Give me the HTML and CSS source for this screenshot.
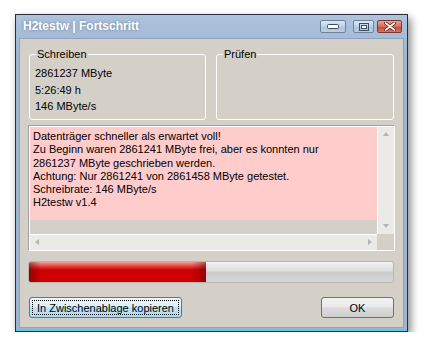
FILE: index.html
```html
<!DOCTYPE html>
<html lang="de">
<head>
<meta charset="utf-8">
<title>H2testw | Fortschritt</title>
<link rel="stylesheet" href="styles.css">
</head>
<body>
<div class="window">
  <div class="titlebar">
    <span class="title">H2testw | Fortschritt</span>
    <div class="caption-buttons">
      <span class="cbtn min"><svg width="12" height="6" viewBox="0 0 12 6"><rect x="0.5" y="0.5" width="11" height="4" rx="1" fill="#fff" stroke="#3c4d63"/></svg></span>
      <span class="cbtn max"><svg width="10" height="8" viewBox="0 0 10 8"><rect x="0.5" y="0.5" width="9" height="7" fill="none" stroke="#3c4d63"/><rect x="2.5" y="2.5" width="5" height="3" fill="#fff" stroke="#3c4d63"/></svg></span>
      <span class="cbtn close"><svg width="12" height="9" viewBox="0 0 12 9"><path d="M1.5 1 L10.5 8 M10.5 1 L1.5 8" stroke="#5b1a12" stroke-width="3.2" stroke-linecap="round"/><path d="M1.5 1 L10.5 8 M10.5 1 L1.5 8" stroke="#fff" stroke-width="1.6" stroke-linecap="round"/></svg></span>
    </div>
  </div>
  <div class="client">
    <div class="groups">
      <fieldset class="group">
        <legend>Schreiben</legend>
        <div class="line">2861237 MByte</div>
        <div class="line">5:26:49 h</div>
        <div class="line">146 MByte/s</div>
      </fieldset>
      <fieldset class="group">
        <legend>Prüfen</legend>
      </fieldset>
    </div>
    <div class="edit">
      <div class="edit-main">
        <div class="edit-text">
          <div>Datenträger schneller als erwartet voll!</div>
          <div>Zu Beginn waren 2861241 MByte frei, aber es konnten nur</div>
          <div>2861237 MByte geschrieben werden.</div>
          <div>Achtung: Nur 2861241 von 2861458 MByte getestet.</div>
          <div>Schreibrate: 146 MByte/s</div>
          <div>H2testw v1.4</div>
        </div>
        <div class="vscroll">
          <span class="arrow up"></span>
          <span class="arrow down"></span>
        </div>
      </div>
      <div class="edit-bottom">
        <div class="hscroll">
          <span class="arrow left"></span>
          <span class="arrow right"></span>
        </div>
        <div class="corner"></div>
      </div>
    </div>
    <div class="progress"><div class="fill" style="width: 48.6%"></div></div>
    <div class="buttons">
      <button class="btn copy"><span class="focus">In Zwischenablage kopieren</span></button>
      <button class="btn ok">OK</button>
    </div>
  </div>
</div>
</body>
</html>
```

FILE: styles.css
```css
* { box-sizing: border-box; }
html, body { margin: 0; padding: 0; background: #fff; }
body {
  padding: 14px 0 0 15px;
  font-family: "Liberation Sans", Arial, sans-serif;
  font-size: 11px;
  color: #000;
}
.window {
  width: 393px;
  height: 318px;
  border: 1px solid #2a2f36;
  background: linear-gradient(#aec3dc, #9fb6d2 40px, #9eb5d1);
  box-shadow: 3px 4px 8px rgba(0,0,0,0.45);
  display: flex;
  flex-direction: column;
  padding: 0 3px 3px 3px;
  position: relative;
}
.window::after {
  content: "";
  position: absolute;
  left: 0; right: 0; bottom: 0; height: 2px;
  background: #5cc8ee;
}
.titlebar {
  height: 23px;
  display: flex;
  align-items: center;
  justify-content: space-between;
  padding-left: 4px;
}
.title {
  color: #fff;
  font-weight: bold;
  font-size: 12px;
  font-family: "Liberation Sans", Arial, sans-serif;
  text-shadow: 0 0 3px rgba(60,80,110,0.6);
  margin-top: -1px;
}
.caption-buttons {
  display: flex;
  align-self: flex-start;
  margin-top: 5px;
  margin-right: 2px;
}
.cbtn {
  height: 13px;
  display: flex;
  align-items: center;
  justify-content: center;
  border: 1px solid #6e829c;
  border-radius: 2px;
  background: linear-gradient(#dbe6f3, #c0d1e6 50%, #aec3dc 51%, #bccde2);
}
.cbtn.min { width: 26px; margin-right: 7px; }
.cbtn.max { width: 21px; margin-right: 3px; }
.cbtn.close {
  width: 25px;
  border-color: #7a3a30;
  background: linear-gradient(#e8a595, #d5705b 50%, #c24a31 51%, #d57660);
}
.client {
  flex: 1;
  background: #d4d0c8;
  border: 1px solid #8fa3bd;
  padding: 9px 9px 0 9px;
  display: flex;
  flex-direction: column;
}
.groups {
  display: flex;
  gap: 10px;
}
.group {
  margin: 0;
  flex: 1;
  height: 72px;
  border: 1px solid #fff;
  border-radius: 3px;
  padding: 5px 6px 0 5px;
  min-width: 0;
}
.group:first-child { flex: 0 0 177px; }
.group legend {
  padding: 0 1px;
  margin-left: 1px;
  line-height: 12px;
}
.line {
  line-height: 16.5px;
}
.edit {
  margin-top: 5px;
  margin-left: -1px;
  margin-right: -1px;
  height: 126px;
  border: 1px solid #fff;
  border-top-color: #a0a0a0;
  border-left-color: #a0a0a0;
  box-shadow: inset 1px 1px 0 #fff;
  background: #d4d0c8;
  display: flex;
  flex-direction: column;
  padding: 1px 0 0 1px;
}
.edit-main {
  flex: 1;
  display: flex;
  min-height: 0;
}
.edit-text {
  flex: 1;
  background: #ffcccc;
  height: 93px;
  padding: 3px 3px 0 3px;
  line-height: 13.3px;
  white-space: nowrap;
}
.vscroll {
  width: 17px;
  background: #ebeae6;
  border-left: 1px solid #fff;
  position: relative;
}
.edit-bottom {
  display: flex;
  height: 16px;
}
.hscroll {
  flex: 1;
  background: #ebeae6;
  border-top: 1px solid #fff;
  position: relative;
}
.corner {
  width: 17px;
  background: #d4d0c8;
}
.arrow {
  position: absolute;
  width: 0; height: 0;
  border: 3px solid transparent;
}
.arrow.up { left: 5px; top: 5px; border-bottom: 4px solid #b4b4b4; border-top: 0; }
.arrow.down { left: 5px; bottom: 6px; border-top: 4px solid #b4b4b4; border-bottom: 0; }
.arrow.left { left: 5px; top: 4px; border-right: 4px solid #b4b4b4; border-left: 0; }
.arrow.right { right: 5px; top: 4px; border-left: 4px solid #b4b4b4; border-right: 0; }
.progress {
  margin-top: 10px;
  height: 22px;
  border: 1px solid #b5b5b5;
  border-radius: 3px;
  background: linear-gradient(#f2f2f2, #dedede 45%, #cccccc 50%, #d6d6d6);
  overflow: hidden;
  margin-left: -1px;
}
.fill {
  height: 100%;
  background:
    linear-gradient(90deg, rgba(80,0,0,0.45), rgba(0,0,0,0) 12px, rgba(0,0,0,0) calc(100% - 14px), rgba(80,0,0,0.45)),
    linear-gradient(#f0a0a0, #e03030 25%, #cc0000 40%, #d20000 100%);
}
.buttons {
  display: flex;
  justify-content: space-between;
  margin-top: 14px;
}
.btn {
  font-family: "Liberation Sans", Arial, sans-serif;
  font-size: 11px;
  color: #000;
  height: 21px;
  border-radius: 3px;
  border: 1px solid #707070;
  background: linear-gradient(#f2f2f2, #ebebeb 45%, #dddddd 50%, #cfcfcf);
  padding: 0;
  margin: 0;
}
.btn.copy {
  width: 153px;
  border-color: #3c7fb1;
  background: linear-gradient(#eaf6fd, #d9f0fc 45%, #bee6fd 50%, #a7d9f5);
  padding: 2px;
}
.btn.copy .focus {
  display: flex;
  align-items: center;
  justify-content: center;
  height: 100%;
  border: 1px dotted #000;
}
.btn.ok { width: 73px; }
```
